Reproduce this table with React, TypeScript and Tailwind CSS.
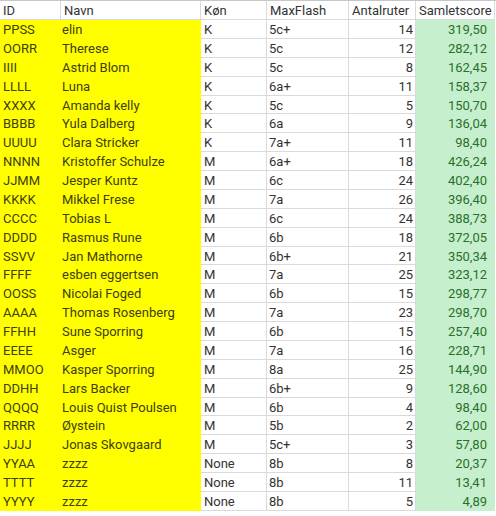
const rows: [string, string, string, string, number, string][] = [
  ["PPSS", "elin", "K", "5c+", 14, "319,50"],
  ["OORR", "Therese", "K", "5c", 12, "282,12"],
  ["IIII", "Astrid Blom", "K", "5c", 8, "162,45"],
  ["LLLL", "Luna", "K", "6a+", 11, "158,37"],
  ["XXXX", "Amanda kelly", "K", "5c", 5, "150,70"],
  ["BBBB", "Yula Dalberg", "K", "6a", 9, "136,04"],
  ["UUUU", "Clara Stricker", "K", "7a+", 11, "98,40"],
  ["NNNN", "Kristoffer Schulze", "M", "6a+", 18, "426,24"],
  ["JJMM", "Jesper Kuntz", "M", "6c", 24, "402,40"],
  ["KKKK", "Mikkel Frese", "M", "7a", 26, "396,40"],
  ["CCCC", "Tobias L", "M", "6c", 24, "388,73"],
  ["DDDD", "Rasmus Rune", "M", "6b", 18, "372,05"],
  ["SSVV", "Jan Mathorne", "M", "6b+", 21, "350,34"],
  ["FFFF", "esben eggertsen", "M", "7a", 25, "323,12"],
  ["OOSS", "Nicolai Foged", "M", "6b", 15, "298,77"],
  ["AAAA", "Thomas Rosenberg", "M", "7a", 23, "298,70"],
  ["FFHH", "Sune Sporring", "M", "6b", 15, "257,40"],
  ["EEEE", "Asger", "M", "7a", 16, "228,71"],
  ["MMOO", "Kasper Sporring", "M", "8a", 25, "144,90"],
  ["DDHH", "Lars Backer", "M", "6b+", 9, "128,60"],
  ["QQQQ", "Louis Quist Poulsen", "M", "6b", 4, "98,40"],
  ["RRRR", "Øystein", "M", "5b", 2, "62,00"],
  ["JJJJ", "Jonas Skovgaard", "M", "5c+", 3, "57,80"],
  ["YYAA", "zzzz", "None", "8b", 8, "20,37"],
  ["TTTT", "zzzz", "None", "8b", 11, "13,41"],
  ["YYYY", "zzzz", "None", "8b", 5, "4,89"],
];

const cols = "grid grid-cols-[61px_140px_66px_82px_67px_79px]";
const cell = "truncate border-r border-b leading-[20px]";

export default function App() {
  return (
    <div className="h-[516px] w-[496px] overflow-hidden bg-white text-[13px] text-[#333] [font-family:Roboto,'Liberation_Sans',sans-serif]">
      <div className={`${cols} h-[20px] border-t border-[#c6c6c6]`}>
        {["ID", "Navn", "Køn", "MaxFlash", "Antalruter", "Samletscore"].map((h) => (
          <div key={h} className={`${cell} border-[#dadada] pl-[3px] !leading-[19px]`}>
            {h}
          </div>
        ))}
      </div>
      {rows.map(([id, navn, kon, flash, ruter, score]) => (
        <div key={id + navn} className={`${cols} h-[18.88px]`}>
          <div className={`${cell} border-[#ffff00] bg-[#ffff00] pl-[3px] text-[#40400f]`}>{id}</div>
          <div className={`${cell} border-[#ffff00] bg-[#ffff00] pl-[1px] text-[#40400f]`}>{navn}</div>
          <div className={`${cell} border-[#dadada] pl-[3px]`}>{kon}</div>
          <div className={`${cell} border-[#dadada] pl-[2px]`}>{flash}</div>
          <div className={`${cell} border-[#dadada] pr-[2px] text-right`}>{ruter}</div>
          <div className={`${cell} border-[#c6efce] bg-[#c6efce] pr-[7px] text-right text-[#2a702a]`}>
            {score}
          </div>
        </div>
      ))}
    </div>
  );
}
